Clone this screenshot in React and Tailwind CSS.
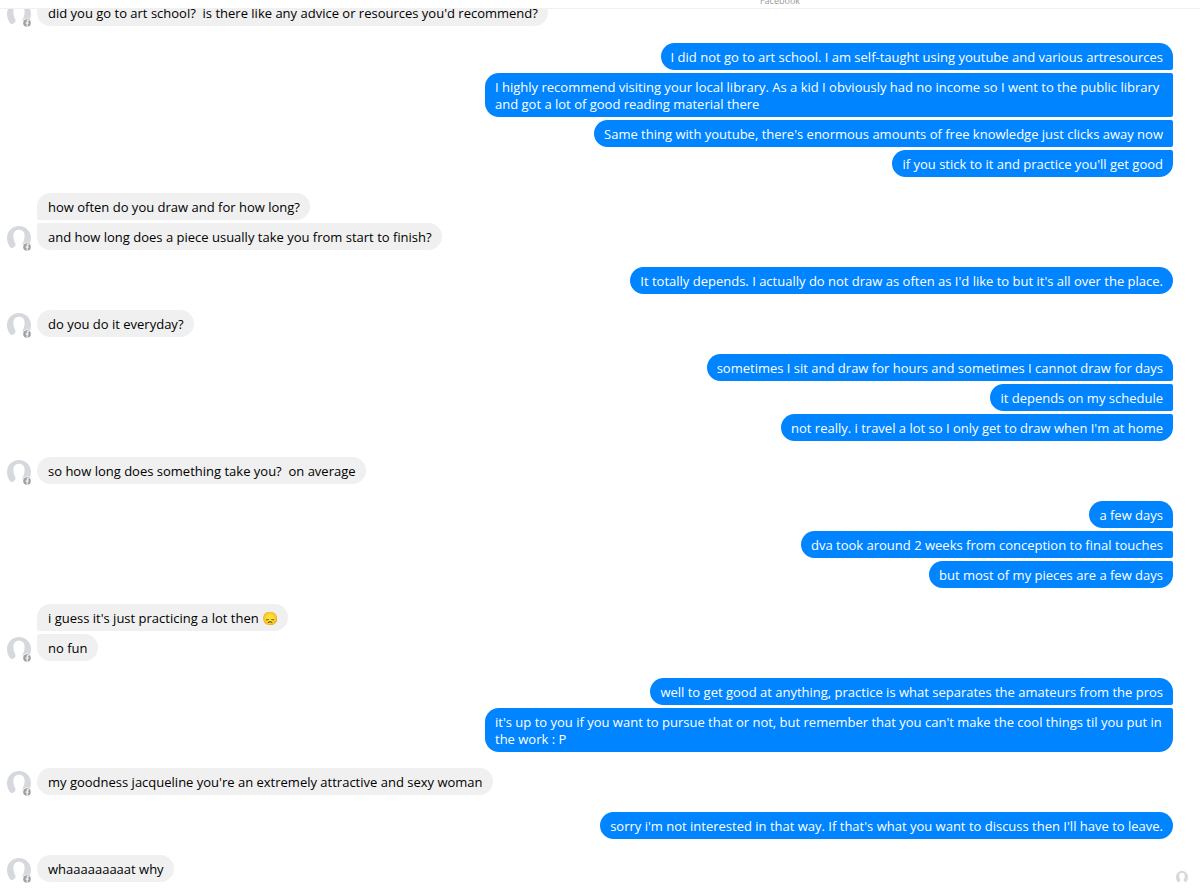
import React from 'react'
import { clsx } from 'clsx'

const conversation = [
  { from: 'them', messages: ["did you go to art school?\u00a0 is there like any advice or resources you'd recommend?"] },
  {
    from: 'me',
    messages: [
      'I did not go to art school. I am self-taught using youtube and various artresources',
      'I highly recommend visiting your local library. As a kid I obviously had no income so I went to the public library and got a lot of good reading material there',
      "Same thing with youtube, there's enormous amounts of free knowledge just clicks away now",
      "if you stick to it and practice you'll get good",
    ],
  },
  {
    from: 'them',
    messages: [
      'how often do you draw and for how long?',
      'and how long does a piece usually take you from start to finish?',
    ],
  },
  { from: 'me', messages: ["It totally depends. I actually do not draw as often as I'd like to but it's all over the place."] },
  { from: 'them', messages: ['do you do it everyday?'] },
  {
    from: 'me',
    messages: [
      'sometimes I sit and draw for hours and sometimes I cannot draw for days',
      'it depends on my schedule',
      "not really. i travel a lot so I only get to draw when I'm at home",
    ],
  },
  { from: 'them', messages: ['so how long does something take you?\u00a0 on average'] },
  {
    from: 'me',
    messages: [
      'a few days',
      'dva took around 2 weeks from conception to final touches',
      'but most of my pieces are a few days',
    ],
  },
  { from: 'them', messages: ["i guess it's just practicing a lot then 😞", 'no fun'] },
  {
    from: 'me',
    messages: [
      'well to get good at anything, practice is what separates the amateurs from the pros',
      "it's up to you if you want to pursue that or not, but remember that you can't make the cool things til you put in the work : P",
    ],
  },
  { from: 'them', messages: ["my goodness jacqueline you're an extremely attractive and sexy woman"] },
  {
    from: 'me',
    messages: ["sorry i'm not interested in that way. If that's what you want to discuss then I'll have to leave."],
  },
  { from: 'them', messages: ['whaaaaaaaaat why'] },
]

function Silhouette({ className }) {
  return (
    <svg viewBox="0 0 24 24" className={className} aria-hidden="true">
      <path
        fill="#d5d8dd"
        d="M12 0C5.200 0 0 5.300 0 12c0 4.300 1.600 7.800 4.200 10.300C5.200 21.900 7.600 21.100 8.200 19.900C8.600 18.900 8.500 17.600 8.100 16.700C6.900 14.900 6.400 12.300 6.400 9.500C6.400 5.900 8.500 3.700 12 3.700s5.600 2.200 5.600 5.800c0 2.800-.5 5.400-1.700 7.200c-.4.9-.5 2.200-.1 3.200c.6 1.200 3 2 4 2.400C22.400 19.800 24 16.300 24 12C24 5.300 18.800 0 12 0z"
      />
    </svg>
  )
}

function Avatar() {
  return (
    <div className="relative size-6 shrink-0">
      <Silhouette className="size-6" />
      <svg viewBox="0 0 10 10" className="absolute -right-px -bottom-0.5 size-[10px]" aria-hidden="true">
        <circle cx="5" cy="5" r="4.500" fill="#fff" />
        <circle cx="5" cy="5" r="3.800" fill="#a0a0a0" />
        <path
          d="M4.600 8.800V5.700H3.600V4.500h1V3.700c0-1 .6-1.600 1.500-1.600h.8v1.100h-.5c-.4 0-.6.2-.6.6v.7h1.100l-.2 1.200h-.9V8.800z"
          fill="#f4f4f4"
        />
      </svg>
    </div>
  )
}

function Bubble({ mine, first, last, children }) {
  return (
    <p
      className={clsx(
        'w-fit max-w-[688px] pt-[6px] pr-[10px] pb-1',
        mine
          ? 'rounded-l-[14px] bg-[#0084ff] pl-[10px] text-white'
          : 'rounded-r-[14px] bg-[#f0f0f0] pl-[11px] text-black',
        mine && (first ? 'rounded-tr-[14px]' : 'rounded-tr-[2px]'),
        mine && (last ? 'rounded-br-[14px]' : 'rounded-br-[2px]'),
        !mine && (first ? 'rounded-tl-[14px]' : 'rounded-tl-[2px]'),
        !mine && (last ? 'rounded-bl-[14px]' : 'rounded-bl-[2px]'),
      )}
    >
      {children}
    </p>
  )
}

function MessageGroup({ from, messages }) {
  const mine = from === 'me'
  return (
    <li className={clsx('flex items-end gap-[6px]', mine ? 'justify-end pt-[17px]' : 'pt-4')}>
      {!mine && <Avatar />}
      <div className={clsx('flex flex-col gap-[3px]', mine && 'items-end')}>
        {messages.map((text, i) => (
          <Bubble key={text} mine={mine} first={i === 0} last={i === messages.length - 1}>
            {text}
          </Bubble>
        ))}
      </div>
    </li>
  )
}

export default function App() {
  return (
    <div className="relative min-h-screen overflow-hidden bg-white font-['Open_Sans','Noto_Sans',sans-serif] text-[13px] leading-[17px]">
      <header className="relative z-10 flex h-[9px] items-end justify-center overflow-hidden border-b border-[#f0f0f0] bg-white pb-px pl-[360px] text-[9px] leading-3 text-[#999]">
        Facebook
      </header>
      <main className="-mt-[26px] pr-[27px] pl-[7px]">
        <ul>
          {conversation.map((group, i) => (
            <MessageGroup key={i} from={group.from} messages={group.messages} />
          ))}
        </ul>
      </main>
      <div className="absolute right-3 bottom-2">
        <Silhouette className="size-3" />
      </div>
    </div>
  )
}
